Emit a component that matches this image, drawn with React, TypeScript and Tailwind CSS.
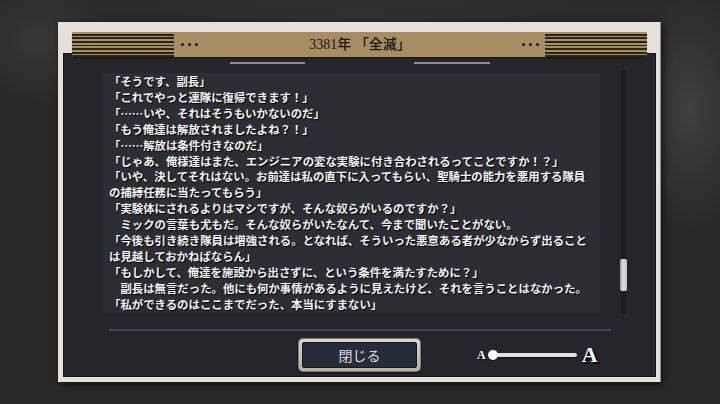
import React from "react";

const lines = [
  "「そうです、副長」",
  "「これでやっと連隊に復帰できます！」",
  "「……いや、それはそうもいかないのだ」",
  "「もう俺達は解放されましたよね？！」",
  "「……解放は条件付きなのだ」",
  "「じゃあ、俺様達はまた、エンジニアの変な実験に付き合わされるってことですか！？」",
  "「いや、決してそれはない。お前達は私の直下に入ってもらい、聖騎士の能力を悪用する隊員",
  "の捕縛任務に当たってもらう」",
  "「実験体にされるよりはマシですが、そんな奴らがいるのですか？」",
  "　ミックの言葉も尤もだ。そんな奴らがいたなんて、今まで聞いたことがない。",
  "「今後も引き続き隊員は増強される。となれば、そういった悪意ある者が少なからず出ること",
  "は見越しておかねばならん」",
  "「もしかして、俺達を施設から出さずに、という条件を満たすために？」",
  "　副長は無言だった。他にも何か事情があるように見えたけど、それを言うことはなかった。",
  "「私ができるのはここまでだった、本当にすまない」",
];

function Dots() {
  return (
    <div className="flex items-center gap-[4px]">
      <span className="block w-[3px] h-[3px] rounded-full bg-[#1d1913]" />
      <span className="block w-[3px] h-[3px] rounded-full bg-[#1d1913]" />
      <span className="block w-[3px] h-[3px] rounded-full bg-[#1d1913]" />
    </div>
  );
}

function Stripes() {
  return (
    <div className="w-[102px] h-[25px] bg-[repeating-linear-gradient(to_bottom,#a68d64_0px,#a68d64_1.8px,#2a2419_1.8px,#2a2419_3.6px)]" />
  );
}

export default function App() {
  return (
    <div className="w-[720px] h-[404px] overflow-hidden pt-[22px] pl-[58px] bg-[#292929] bg-[radial-gradient(ellipse_60px_120px_at_690px_110px,#404040_0%,rgba(64,64,64,0)_100%),radial-gradient(ellipse_70px_60px_at_40px_40px,#383838_0%,rgba(56,56,56,0)_100%),radial-gradient(ellipse_400px_200px_at_360px_10px,#303030_0%,rgba(48,48,48,0)_100%)]">
      <div className="w-[603px] h-[360px] bg-[#e5e0da] border-r border-[#8f8b85] flex flex-col items-start shadow-[2px_2px_8px_rgba(0,0,0,0.6)]">
        {/* header */}
        <div className="relative z-10 ml-[14px] mt-[10px] w-[575px] h-[25px] rounded-[2px] overflow-hidden bg-[#a68d64] flex items-center shadow-[0_1px_1px_rgba(0,0,0,0.45)]">
          <Stripes />
          <div className="ml-[7px]">
            <Dots />
          </div>
          <div className="flex-1 text-center text-[14px] leading-[25px] font-medium text-[#1a1610] [font-family:'Liberation_Serif','Noto_Sans_CJK_JP',serif]">
            3381年 「全滅」
          </div>
          <div className="mr-[6px]">
            <Dots />
          </div>
          <Stripes />
        </div>

        {/* dark panel */}
        <div className="ml-[5px] -mt-[4px] w-[593px] h-[324px] bg-[#25262b] border border-[#15161a] flex flex-col">
          {/* tab indicators */}
          <div className="mt-[8px] h-[2px] flex">
            <div className="ml-[166px] w-[75px] h-[2px] bg-[#8a8a8a]" />
            <div className="ml-[109px] w-[76px] h-[2px] bg-[#8a8a8a]" />
          </div>

          {/* content row */}
          <div className="mt-[6px] flex items-start">
            <div className="ml-[39px] mt-[3px] w-[497px] h-[240px] bg-[#2d2e34] overflow-hidden pl-[6px] pt-[1px]">
              {lines.map((l, i) => (
                <div
                  key={i}
                  className="whitespace-nowrap text-[11.4px] leading-[15.9px] font-bold text-[#f4f4f4] [text-shadow:1px_1px_1px_#000] [font-family:'Noto_Sans_CJK_JP',sans-serif]"
                >
                  {l}
                </div>
              ))}
            </div>
            <div className="ml-[21px] w-[5px] h-[244px] bg-[#1c1d21] flex flex-col items-center">
              <div className="mt-[189px] w-[7px] h-[32px] shrink-0 rounded-[2px] bg-[linear-gradient(to_right,#9a9a9a,#dedede_40%,#c4c4c4)]" />
            </div>
          </div>

          {/* separator */}
          <div className="mt-[15px] ml-[45px] w-[502px] h-[2px] bg-[#42454c]" />

          {/* bottom row */}
          <div className="mt-[7px] flex items-center h-[34px]">
            <div className="ml-[234px] w-[123px] h-[34px] rounded-[5px] p-[1px] bg-[#7d796f] shadow-[0_1px_2px_rgba(0,0,0,0.6)]">
              <div className="w-full h-full rounded-[4px] p-[3px] bg-[linear-gradient(to_bottom,#d9d5cb,#b5b1a6)]">
                <div className="w-full h-full rounded-[2px] border border-[#15171c] bg-[#252c3a] flex items-center justify-center text-[14px] text-[#dcdcdc] [font-family:'Noto_Sans_CJK_JP',sans-serif]">
                  閉じる
                </div>
              </div>
            </div>

            <div className="ml-[56px] flex items-center">
              <span className="text-[12px] leading-none font-bold text-white [text-shadow:1px_1px_1px_#000] [font-family:'Liberation_Serif',serif]">
                A
              </span>
              <div className="relative ml-[2px] w-[89px] h-[10px] flex items-center">
                <div className="ml-[5px] w-[84px] h-[4px] rounded-full bg-[#e2e2e2] shadow-[0_1px_1px_rgba(0,0,0,0.6)]" />
                <div className="absolute left-0 top-0 w-[10px] h-[10px] rounded-full bg-white shadow-[0_1px_1px_rgba(0,0,0,0.6)]" />
              </div>
              <span className="ml-[5px] text-[22px] leading-none font-bold text-white [text-shadow:1px_1px_0_#000,2px_2px_1px_#000] [font-family:'Liberation_Serif',serif]">
                A
              </span>
            </div>
          </div>
        </div>
      </div>
    </div>
  );
}
